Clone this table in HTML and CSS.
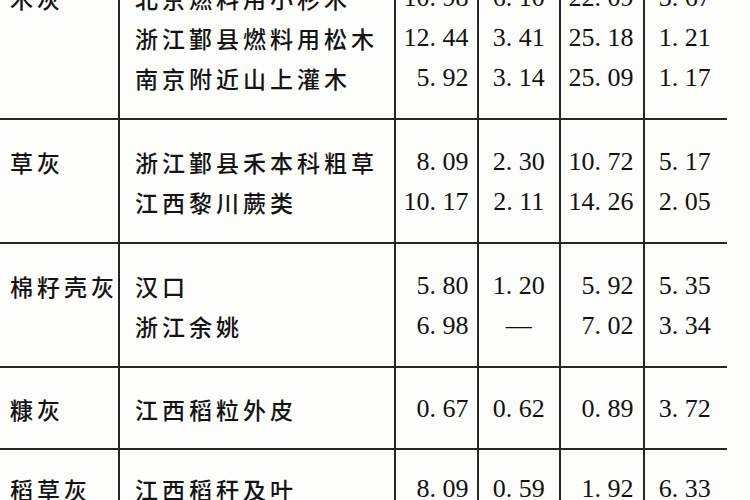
FILE: index.html
```html
<!DOCTYPE html>
<html lang="zh">
<head>
<meta charset="utf-8">
<link rel="stylesheet" href="styles.css">
</head>
<body>
<div class="table">
  <div class="group first">
    <div class="col cat"><div class="row">木灰</div></div>
    <div class="col names">
      <div class="row">北京燃料用小杉木</div>
      <div class="row">浙江鄞县燃料用松木</div>
      <div class="row">南京附近山上灌木</div>
    </div>
    <div class="col num n1"><div class="row">10. 98</div><div class="row">12. 44</div><div class="row">5. 92</div></div>
    <div class="col num n2"><div class="row">6. 10</div><div class="row">3. 41</div><div class="row">3. 14</div></div>
    <div class="col num n3"><div class="row">22. 09</div><div class="row">25. 18</div><div class="row">25. 09</div></div>
    <div class="col num n4"><div class="row">3. 67</div><div class="row">1. 21</div><div class="row">1. 17</div></div>
  </div>
  <div class="group">
    <div class="col cat"><div class="row">草灰</div></div>
    <div class="col names">
      <div class="row">浙江鄞县禾本科粗草</div>
      <div class="row">江西黎川蕨类</div>
    </div>
    <div class="col num n1"><div class="row">8. 09</div><div class="row">10. 17</div></div>
    <div class="col num n2"><div class="row">2. 30</div><div class="row">2. 11</div></div>
    <div class="col num n3"><div class="row">10. 72</div><div class="row">14. 26</div></div>
    <div class="col num n4"><div class="row">5. 17</div><div class="row">2. 05</div></div>
  </div>
  <div class="group">
    <div class="col cat"><div class="row">棉籽壳灰</div></div>
    <div class="col names">
      <div class="row">汉口</div>
      <div class="row">浙江余姚</div>
    </div>
    <div class="col num n1"><div class="row">5. 80</div><div class="row">6. 98</div></div>
    <div class="col num n2"><div class="row">1. 20</div><div class="row">—</div></div>
    <div class="col num n3"><div class="row">5. 92</div><div class="row">7. 02</div></div>
    <div class="col num n4"><div class="row">5. 35</div><div class="row">3. 34</div></div>
  </div>
  <div class="group single">
    <div class="col cat"><div class="row">糠灰</div></div>
    <div class="col names"><div class="row">江西稻粒外皮</div></div>
    <div class="col num n1"><div class="row">0. 67</div></div>
    <div class="col num n2"><div class="row">0. 62</div></div>
    <div class="col num n3"><div class="row">0. 89</div></div>
    <div class="col num n4"><div class="row">3. 72</div></div>
  </div>
  <div class="group last">
    <div class="col cat"><div class="row">稻草灰</div></div>
    <div class="col names"><div class="row">江西稻秆及叶</div></div>
    <div class="col num n1"><div class="row">8. 09</div></div>
    <div class="col num n2"><div class="row">0. 59</div></div>
    <div class="col num n3"><div class="row">1. 92</div></div>
    <div class="col num n4"><div class="row">6. 33</div></div>
  </div>
</div>
</body>
</html>
```
FILE: styles.css
```css
html, body {
  margin: 0;
  padding: 0;
  background: #fdfdfb;
  overflow: hidden;
}
body {
  width: 750px;
  height: 500px;
  color: #141414;
  font-family: "Noto Sans CJK SC", "Liberation Serif", serif;
}
.table {
  width: 727px;
  margin-top: -44px;
}
.group {
  display: flex;
  border-bottom: 2px solid #262626;
}
.col {
  padding-top: 22px;
  padding-bottom: 20px;
  box-sizing: border-box;
}
.single .col {
  padding-top: 21px;
  padding-bottom: 19px;
}
.last .col {
  padding-top: 19px;
}
.row {
  height: 40px;
  line-height: 40px;
  white-space: nowrap;
}
.cat {
  width: 120px;
  border-right: 2px solid #262626;
  padding-left: 10px;
  font-size: 23px;
  font-weight: 500;
  letter-spacing: 4px;
}
.names {
  width: 274px;
  padding-left: 15px;
  font-size: 23px;
  font-weight: 500;
  letter-spacing: 4px;
}
.num {
  border-left: 2px solid #262626;
  font-family: "Liberation Serif", serif;
  font-size: 26px;
  color: #111;
}
.n1 { width: 82.5px; text-align: right; padding-right: 8px; }
.n2 { width: 82.5px; text-align: center; }
.n3 { width: 83.5px; text-align: right; padding-right: 9px; }
.n4 { width: 84.5px; text-align: center; padding-right: 2px; }
```
